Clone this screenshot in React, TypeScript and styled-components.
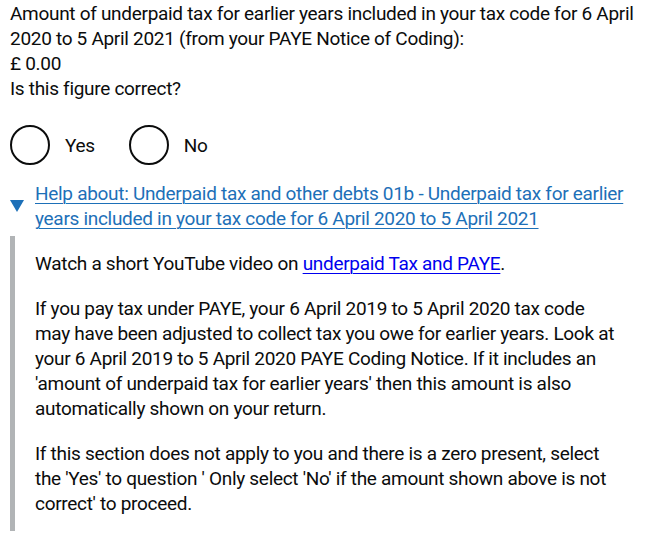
import React from 'react';
import styled, { createGlobalStyle } from 'styled-components';

const GlobalStyle = createGlobalStyle`
  body {
    margin: 0;
    background: #ffffff;
    color: #0b0c0c;
    font-family: Roboto, "Liberation Sans", Arial, sans-serif;
    font-size: 19px;
    line-height: 25px;
    letter-spacing: -0.3px;
  }
`;

const Page = styled.main`
  padding: 1px 10px 0 10px;
`;

const Line = styled.p`
  margin: 0;
`;

const Radios = styled.div`
  display: flex;
  margin-top: 24px;
`;

const RadioItem = styled.label`
  display: flex;
  align-items: flex-start;
  margin-right: 19px;
  cursor: pointer;
`;

const Circle = styled.span`
  box-sizing: border-box;
  width: 40px;
  height: 40px;
  border: 2px solid #0b0c0c;
  border-radius: 50%;
  flex-shrink: 0;
`;

const RadioLabel = styled.span`
  padding: 8px 15px 5px;
`;

const Details = styled.details`
  margin-top: 16px;
`;

const Summary = styled.summary`
  display: inline-block;
  position: relative;
  padding-left: 25px;
  color: #1d70b8;
  cursor: pointer;
  list-style: none;

  &::-webkit-details-marker {
    display: none;
  }

  &::before {
    content: '';
    position: absolute;
    top: -1px;
    bottom: 0;
    left: 0;
    margin: auto;
    width: 0;
    height: 0;
    border-style: solid;
    border-color: transparent;
    border-width: 12px 7px 0 7px;
    border-top-color: #1d70b8;
  }
`;

const SummaryText = styled.span`
  text-decoration: underline;
  text-decoration-thickness: 1px;
  text-underline-offset: 0.1578em;
`;

const DetailsText = styled.div`
  margin-top: 5px;
  padding: 15px 21px 15px 20px;
  border-left: 5px solid #b1b4b6;
`;

const Body = styled.p<{ $last?: boolean }>`
  margin: 0 0 ${(p) => (p.$last ? '0' : '20px')};
`;

const VideoLink = styled.a`
  color: #0000ee;
  text-decoration: underline;
  text-decoration-thickness: 1px;
  text-underline-offset: 0.1578em;
`;

export default function App() {
  return (
    <>
      <GlobalStyle />
      <Page>
        <Line>
          Amount of underpaid tax for earlier years included in your tax code for 6 April 2020 to 5 April 2021 (from
          your PAYE Notice of Coding):
        </Line>
        <Line>£ 0.00</Line>
        <Line>Is this figure correct?</Line>

        <Radios>
          {['Yes', 'No'].map((option) => (
            <RadioItem key={option}>
              <Circle />
              <RadioLabel>{option}</RadioLabel>
            </RadioItem>
          ))}
        </Radios>

        <Details open>
          <Summary>
            <SummaryText>
              Help about: Underpaid tax and other debts 01b - Underpaid tax for earlier years included in your tax code
              for 6 April 2020 to 5 April 2021
            </SummaryText>
          </Summary>
          <DetailsText>
            <Body>
              Watch a short YouTube video on <VideoLink href="#">underpaid Tax and PAYE</VideoLink>.
            </Body>
            <Body>
              If you pay tax under PAYE, your 6 April 2019 to 5 April 2020 tax code may have been adjusted to collect
              tax you owe for earlier years. Look at your 6 April 2019 to 5 April 2020 PAYE Coding Notice. If it
              includes an 'amount of underpaid tax for earlier years' then this amount is also automatically shown on
              your return.
            </Body>
            <Body $last>
              If this section does not apply to you and there is a zero present, select the 'Yes' to question ' Only
              select 'No' if the amount shown above is not correct' to proceed.
            </Body>
          </DetailsText>
        </Details>
      </Page>
    </>
  );
}
